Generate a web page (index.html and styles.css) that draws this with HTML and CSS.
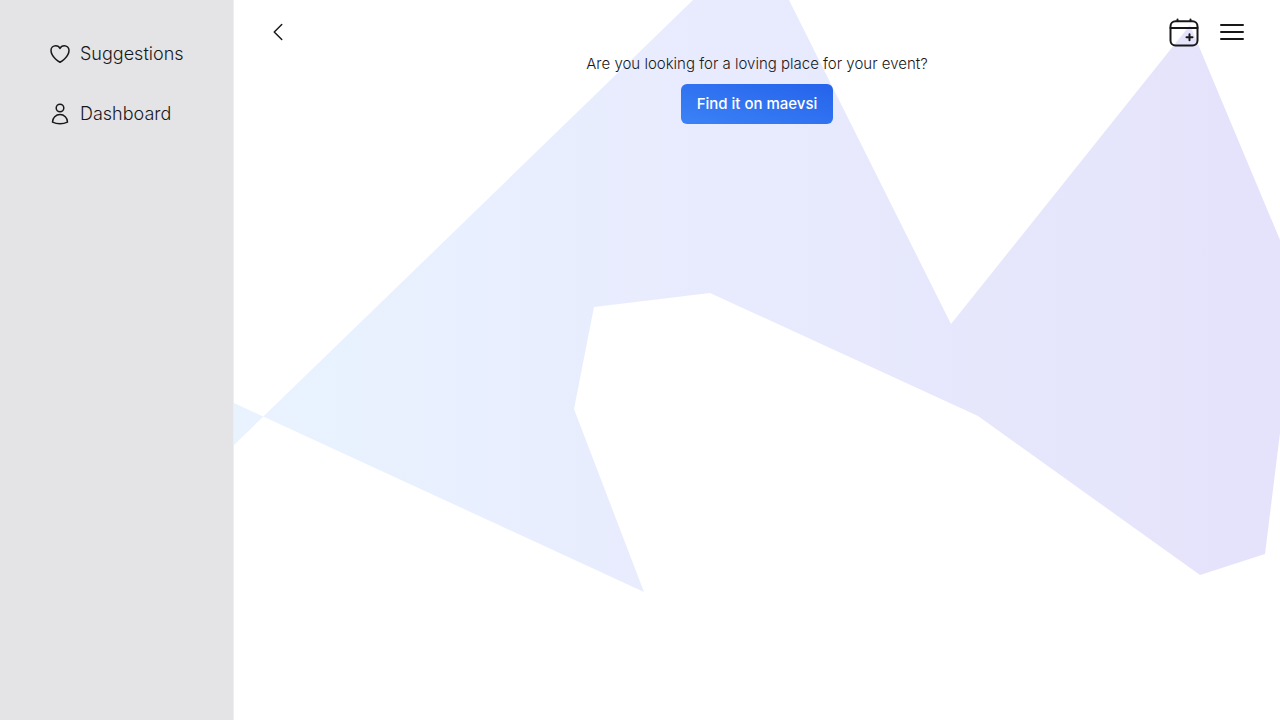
FILE: index.html
```html
<!DOCTYPE html>
<html lang="en">
<head>
<meta charset="utf-8">
<meta name="viewport" content="width=device-width, initial-scale=1">
<title>maevsi</title>
<link rel="stylesheet" href="styles.css">
</head>
<body>
<div class="layout">
  <nav class="sidebar" aria-label="Main">
    <a class="nav-link" href="#suggestions">
      <svg class="icon" viewBox="0 0 24 24" aria-hidden="true"><path d="M21 8.25c0-2.485-2.099-4.5-4.688-4.5-1.935 0-3.597 1.126-4.312 2.733-.715-1.607-2.377-2.733-4.313-2.733C5.1 3.75 3 5.765 3 8.25c0 7.22 9 12 9 12s9-4.78 9-12z"/></svg>
      Suggestions
    </a>
    <a class="nav-link" href="#dashboard">
      <svg class="icon" viewBox="0 0 24 24" aria-hidden="true"><circle cx="12" cy="6" r="3.8"/><path d="M4.5 20.1a7.5 7.5 0 0 1 15 0A17.9 17.9 0 0 1 12 21.8c-2.7 0-5.200-.6-7.500-1.700z"/></svg>
      Dashboard
    </a>
  </nav>
  <div class="page">
    <svg class="backdrop" viewBox="0 0 1046 720" preserveAspectRatio="none" aria-hidden="true">
      <defs>
        <linearGradient id="tint" x1="0" y1="0" x2="1" y2="0">
          <stop offset="0" stop-color="#e9f3fe"/>
          <stop offset=".35" stop-color="#e8edfe"/>
          <stop offset=".5" stop-color="#e8eafd"/>
          <stop offset=".85" stop-color="#e5e5fb"/>
          <stop offset="1" stop-color="#e5e2fb"/>
        </linearGradient>
      </defs>
      <path fill="url(#tint)" d="M0 403 410 592 340 409 360 307 476 293 744 416 966 575 1031 554 1046 433V240L956 25 717 324 555 0H459L0 445z"/>
    </svg>
    <header class="topbar">
      <button class="icon-button" type="button" aria-label="Back">
        <svg class="icon" viewBox="0 0 24 24" aria-hidden="true"><path d="M15.750 19.500 8.250 12l7.500-7.500"/></svg>
      </button>
      <div class="actions">
        <button class="icon-button" type="button" aria-label="Create event">
          <svg class="icon-large" viewBox="0 0 32 32" aria-hidden="true"><rect x="2.500" y="5.200" width="27" height="24.300" rx="5"/><path d="M9.500 3.500v1.500M22.500 3.500v1.500M2.500 12h27M18.500 21.300h6M21.500 18.300v6"/></svg>
        </button>
        <button class="icon-button" type="button" aria-label="Menu">
          <svg class="icon-large" viewBox="0 0 32 32" aria-hidden="true"><path d="M5 9h22M5 16h22M5 23h22"/></svg>
        </button>
      </div>
    </header>
    <main class="content">
      <p class="question">Are you looking for a loving place for your event?</p>
      <a class="cta" href="#maevsi">Find it on maevsi</a>
    </main>
  </div>
</div>
</body>
</html>
```
FILE: styles.css
```css
* {
  box-sizing: border-box;
}

body {
  margin: 0;
  color: #18181b;
  background: #fff;
  font-family: Inter, "Liberation Sans", sans-serif;
  font-size: 15px;
  font-weight: 300;
  line-height: 24px;
}

.layout {
  display: flex;
  min-height: 100vh;
}

.sidebar {
  display: flex;
  flex: none;
  flex-direction: column;
  gap: 32px;
  min-width: 234px;
  padding: 40px 48px;
  border-right: 1px solid #eeeef0;
  background: #e4e4e6;
}

.nav-link {
  display: flex;
  align-items: center;
  gap: 8px;
  color: inherit;
  font-size: 18px;
  line-height: 28px;
  text-decoration: none;
}

.icon,
.icon-large {
  display: block;
  width: 24px;
  height: 24px;
  fill: none;
  stroke: currentColor;
  stroke-width: 1.5;
  stroke-linecap: round;
  stroke-linejoin: round;
}

.icon-large {
  width: 32px;
  height: 32px;
  stroke-width: 2;
}

.page {
  position: relative;
  flex: 1;
  min-width: 0;
}

.backdrop {
  position: absolute;
  inset: 0;
  z-index: -1;
  width: 100%;
  height: 100%;
}

.topbar {
  display: flex;
  align-items: center;
  justify-content: space-between;
  padding: 16px 32px 4px;
}

.actions {
  display: flex;
  gap: 16px;
}

.icon-button {
  padding: 0;
  border: 0;
  color: inherit;
  background: none;
}

.content {
  display: flex;
  flex-direction: column;
  align-items: center;
  gap: 8px;
}

.question {
  margin: 0;
}

.cta {
  padding: 8px 16px;
  border-radius: 6px;
  color: #fff;
  background: linear-gradient(to top right, #3b82f6, #2563eb);
  font-weight: 500;
  text-decoration: none;
}
```
